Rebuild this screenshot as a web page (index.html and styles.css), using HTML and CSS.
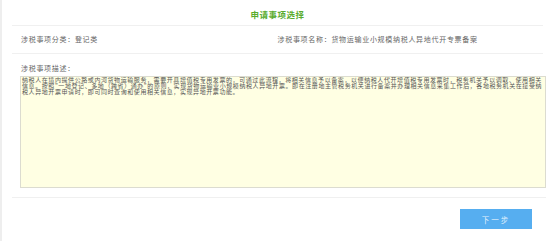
FILE: index.html
```html
<!DOCTYPE html>
<html lang="zh-CN">
<head>
    <meta charset="UTF-8">
    <meta name="viewport" content="width=device-width, initial-scale=1.0">
    <title>申请事项选择</title>
    <link rel="stylesheet" href="styles.css">
</head>
<body>
    <div class="page">
        <header class="title">申请事项选择</header>
        <div class="info-row">
            <div class="info-item">涉税事项分类：登记类</div>
            <div class="info-item">涉税事项名称：货物运输业小规模纳税人异地代开专票备案</div>
        </div>
        <div class="desc">
            <label for="descText">涉税事项描述：</label>
            <textarea id="descText" readonly>纳税人在境内提供公路或内河货物运输服务，需要开具增值税专用发票的，可通过此流程，将相关信息予以备案，以便纳税人代开增值税专用发票时，税务机关予以调取、使用相关信息。按照"一地登记、多地（跨省）通办"的原则，实现货物运输业小规模纳税人异地开票。即在注册地主管税务机关进行备案并办理相关信息采集工作后，各地税务机关在接受纳税人异地开票申请时，即可同时查询和使用相关信息，实现异地开票功能。</textarea>
        </div>
        <div class="actions">
            <button type="button">下一步</button>
        </div>
    </div>
</body>
</html>
```

FILE: styles.css
```css
body {
    margin: 0;
    padding: 0;
    background-color: #fff;
    font-family: "Noto Sans CJK SC", "Noto Sans", sans-serif;
    color: #666;
}
.page {
    height: 241px;
    box-sizing: border-box;
    border-left: 2px solid #eee;
    padding: 0 11px 0 10px;
}
.title {
    height: 26px;
    padding-top: 2px;
    box-sizing: border-box;
    line-height: 24px;
    text-align: center;
    color: #5aac2e;
    font-size: 8.5px;
    letter-spacing: 0.5px;
    font-weight: bold;
    border-bottom: 1px solid #f0f0f0;
}
.info-row {
    display: grid;
    grid-template-columns: 1fr 1fr;
    height: 27px;
    line-height: 27px;
    border-bottom: 1px solid #f0f0f0;
    font-size: 7px;
    letter-spacing: 0.7px;
}
.info-item {
    padding-left: 9px;
}
.info-item + .info-item {
    padding-left: 0;
}
.desc {
    padding: 7px 0 9px 8px;
    border-bottom: 1px solid #f0f0f0;
    margin-right: -3px;
}
.desc label {
    display: block;
    height: 14px;
    line-height: 14px;
    margin-left: 1px;
    margin-bottom: 1px;
    font-size: 7px;
    letter-spacing: 0.7px;
}
.desc textarea {
    display: block;
    width: 100%;
    height: 112px;
    box-sizing: border-box;
    margin: 0;
    padding: 0 1px;
    border: 1px solid #dcdcd0;
    background-color: #ffffe3;
    color: #555;
    font-family: "Noto Sans CJK SC", "Noto Sans", sans-serif;
    font-size: 6px;
    letter-spacing: 0.58px;
    line-height: 6.2px;
    resize: none;
    overflow: hidden;
}
.actions {
    display: flex;
    justify-content: flex-end;
    padding: 11px 11px 0 0;
}
.actions button {
    width: 72px;
    height: 20px;
    padding: 0;
    border: none;
    background-color: #56aef0;
    color: rgba(255, 255, 255, 0.85);
    font-family: "Noto Sans CJK SC", "Noto Sans", sans-serif;
    font-size: 7.5px;
    letter-spacing: 2px;
    cursor: pointer;
}
```
